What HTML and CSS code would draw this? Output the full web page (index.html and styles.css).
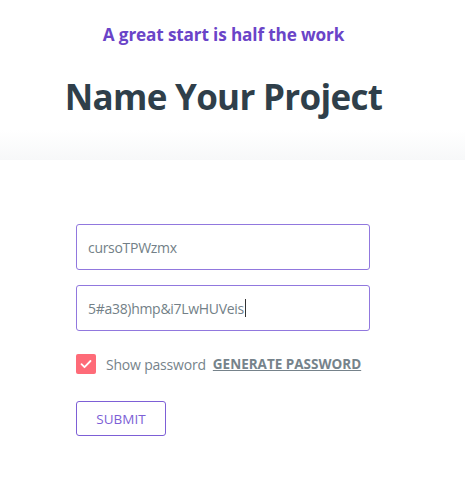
FILE: index.html
```html
<!DOCTYPE html>
<html>
<head>
<meta charset="utf-8">
<link rel="stylesheet" href="styles.css">
</head>
<body>
<div class="page">
  <header class="hero">
    <p class="tagline">A great start is half the work</p>
    <h1 class="title">Name Your Project</h1>
  </header>
  <div class="band"></div>
  <form class="form">
    <div class="field"><span class="value">cursoTPWzmx</span></div>
    <div class="field"><span class="value">5#a38)hmp&amp;i7LwHUVeis</span><span class="caret"></span></div>
    <div class="options">
      <span class="check">
        <svg width="20" height="20" viewBox="0 0 20 20"><path d="M5.5 10.2l3 3 6-6.2" fill="none" stroke="#fff" stroke-width="1.8" stroke-linecap="round" stroke-linejoin="round"/></svg>
      </span>
      <span class="label">Show password</span>
      <span class="gen">GENERATE PASSWORD</span>
    </div>
    <div class="actions"><span class="submit">SUBMIT</span></div>
  </form>
</div>
</body>
</html>
```
FILE: styles.css
```css
html, body { margin: 0; padding: 0; background: #fff; }
body { font-family: "Open Sans", "Noto Sans", sans-serif; }
.page { width: 447px; }
.hero { display: flex; flex-direction: column; align-items: center; padding-top: 23px; height: 130px; box-sizing: border-box; }
.tagline { margin: 0; font-size: 17.2px; font-weight: 700; color: #6a44c8; line-height: 24px; letter-spacing: -0.15px; }
.title { margin: 28px 0 0; font-size: 35px; font-weight: 700; color: #2f3f4a; line-height: 44px; letter-spacing: -0.7px; }
.band { height: 30px; background: linear-gradient(to bottom, #ffffff, #f7f8f9); width: 465px; }
.form { width: 294px; margin: 64px 0 0 76px; display: flex; flex-direction: column; }
.field { height: 46px; box-sizing: border-box; border: 1px solid #9178de; border-radius: 3px; display: flex; align-items: center; padding-left: 11px; margin-bottom: 15px; }
.value { font-size: 14px; color: #737f87; letter-spacing: -0.3px; }
.caret { width: 1px; height: 18px; background: #333; margin-left: 1px; }
.options { display: flex; align-items: center; margin-top: 7px; height: 22px; }
.check { width: 20px; height: 20px; border-radius: 2px; background: #fe6b78; display: flex; }
.label { margin-left: 10px; font-size: 14px; color: #76838b; letter-spacing: -0.2px; }
.gen { margin-left: 7px; font-size: 13.5px; font-weight: 700; color: #76838b; text-decoration: underline; letter-spacing: 0; }
.actions { margin-top: 26px; display: flex; }
.submit { width: 90px; height: 35px; box-sizing: border-box; border: 1px solid #7d5fd6; border-radius: 3px; color: #7d5fd6; font-size: 13.5px; display: flex; align-items: center; justify-content: center; }
```
